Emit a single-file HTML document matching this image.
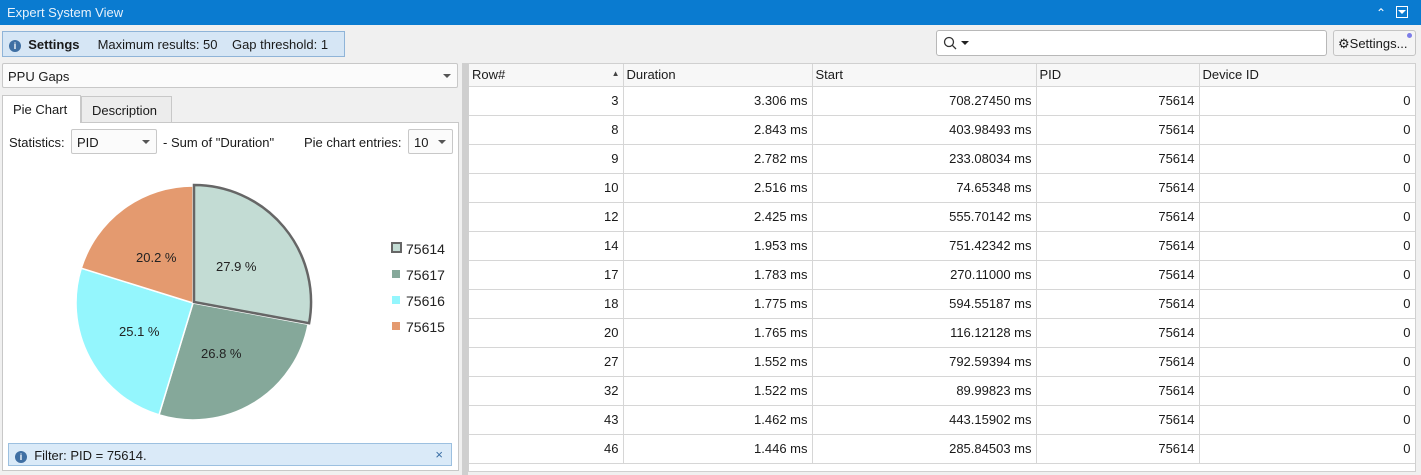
<!DOCTYPE html>
<html><head><meta charset="utf-8"><style>
*{box-sizing:border-box;margin:0;padding:0}
body{width:1421px;height:475px;overflow:hidden;background:#f0f0f0;font-family:"Liberation Sans",sans-serif;font-size:13px;color:#1a1a1a;position:relative}
.abs{position:absolute}
.title{left:0;top:0;width:1421px;height:25px;background:#0a7bd0;color:#e8f2fb;padding:5px 7px;font-size:13px}
.setbar{left:2px;top:31px;width:343px;height:26px;background:#d6e6f5;border:1px solid #8fb4d8;padding:5px 6px;white-space:nowrap}
.info{display:inline-block;width:12px;height:12px;border-radius:50%;background:#3f6fa3;color:#fff;font-size:9px;text-align:center;line-height:12px;font-weight:bold;vertical-align:0px}
.search{left:936px;top:30px;width:391px;height:26px;background:#fff;border:1px solid #b8b8b8;border-radius:3px}
.btn{left:1333px;top:30px;width:83px;height:26px;background:#f4f4f4;border:1px solid #c4c4c4;border-radius:3px;padding:5px 4px;white-space:nowrap}
.combo{background:#fbfbfb;border:1px solid #c8c8c8;border-radius:2px}
.arrow{position:absolute;width:0;height:0;border-left:4px solid transparent;border-right:4px solid transparent;border-top:4px solid #555}
table{border-collapse:collapse;table-layout:fixed;background:#fff}
td{height:29px;border-right:1px solid #d6d6d6;border-bottom:1px solid #d6d6d6;text-align:right;padding:0 4px;font-size:13px}
th{height:22px;font-weight:normal;text-align:left;padding:0 3px;border-right:1px solid #d6d6d6;border-bottom:1px solid #d6d6d6;background:#f7f7f7;font-size:13px}
</style></head><body>
<div class="abs title">Expert System View</div>
<div class="abs" style="left:1376px;top:6px;color:#fff;font-size:12px">&#8963;</div>
<div class="abs" style="left:1396px;top:6px;width:12px;height:12px;border:1px solid #fff;"><div class="arrow" style="left:1px;top:3px;border-top-color:#fff"></div></div>

<div class="abs setbar"><span class="info">i</span>&nbsp; <b>Settings</b>&nbsp;&nbsp;&nbsp;&nbsp; Maximum results: 50 &nbsp;&nbsp; Gap threshold: 1</div>
<div class="abs search"><svg class="abs" style="left:6px;top:5px" width="14" height="14"><circle cx="6" cy="6" r="4.5" fill="none" stroke="#333" stroke-width="1.3"/><line x1="9.3" y1="9.3" x2="13" y2="13" stroke="#333" stroke-width="1.3"/></svg><div class="arrow" style="left:24px;top:10px;border-top-color:#222"></div></div>
<div class="abs btn"><span style="font-size:13px">&#9881;</span>Settings...</div>
<div class="abs" style="left:1407px;top:33px;width:5px;height:5px;border-radius:50%;background:#7d7de8"></div>

<div class="abs combo" style="left:2px;top:63px;width:456px;height:25px;padding:5px 5px">PPU Gaps<div class="arrow" style="right:6px;top:10px"></div></div>
<div class="abs" style="left:2px;top:95px;width:79px;height:28px;background:#fff;border:1px solid #c8c8c8;border-bottom:none;padding:6px 10px;z-index:2">Pie Chart</div>
<div class="abs" style="left:81px;top:96px;width:91px;height:27px;background:#ececec;border:1px solid #c8c8c8;padding:6px 10px">Description</div>
<div class="abs" style="left:2px;top:122px;width:457px;height:349px;background:#fff;border:1px solid #c8c8c8"></div>
<div class="abs" style="left:9px;top:135px">Statistics:</div>
<div class="abs combo" style="left:71px;top:129px;width:86px;height:25px;padding:5px 5px">PID<div class="arrow" style="right:6px;top:10px"></div></div>
<div class="abs" style="left:163px;top:135px">- Sum of "Duration"</div>
<div class="abs" style="left:304px;top:135px">Pie chart entries:</div>
<div class="abs combo" style="left:408px;top:129px;width:45px;height:25px;padding:5px 5px">10<div class="arrow" style="right:6px;top:10px"></div></div>

<svg class="abs" style="left:0;top:0" width="460" height="440">
<path d="M193,303 L193,186 A117,117 0 0 1 308.1,324.2 Z" fill="#c3dcd4" stroke="#fff" stroke-width="1.5"/>
<path d="M193,303 L308.1,324.2 A117,117 0 0 1 159,414.9 Z" fill="#85a89a" stroke="#fff" stroke-width="1.5"/>
<path d="M193,303 L159,414.9 A117,117 0 0 1 81.3,268.2 Z" fill="#94f6fd" stroke="#fff" stroke-width="1.5"/>
<path d="M193,303 L81.3,268.2 A117,117 0 0 1 193,186 Z" fill="#e49a6f" stroke="#fff" stroke-width="1.5"/>
<path d="M194,302 L194,185 A117,117 0 0 1 309.1,323.2 Z" fill="#c3dcd4" stroke="#666" stroke-width="2.5"/>
<g font-family="Liberation Sans" font-size="13" fill="#222">
<text x="216" y="271">27.9 %</text><text x="136" y="262">20.2 %</text>
<text x="119" y="336">25.1 %</text><text x="201" y="358">26.8 %</text>
</g>
<g font-family="Liberation Sans" font-size="14" fill="#222">
<text x="406" y="254">75614</text><text x="406" y="280">75617</text><text x="406" y="306">75616</text><text x="406" y="332">75615</text>
</g>
<rect x="392" y="243" width="9" height="9" fill="#c3dcd4" stroke="#666" stroke-width="2"/>
<rect x="392" y="270" width="8" height="8" fill="#85a89a"/>
<rect x="392" y="296" width="8" height="8" fill="#94f6fd"/>
<rect x="392" y="322" width="8" height="8" fill="#e49a6f"/>
</svg>

<div class="abs" style="left:8px;top:443px;width:444px;height:23px;background:#daeaf8;border:1px solid #9cc0e0;padding:4px 6px"><span class="info">i</span>&nbsp; Filter: PID = 75614.<span style="position:absolute;right:8px;top:3px;color:#3a6ea5">&#215;</span></div>

<div class="abs" style="left:462px;top:63px;width:6px;height:412px;background:#cfcfcf"></div>
<div class="abs" style="left:468px;top:63px;width:948px;height:409px;background:#fff;border:1px solid #d0d0d0;overflow:hidden">
<table style="width:946px">
<colgroup><col style="width:154px"><col style="width:189px"><col style="width:224px"><col style="width:163px"><col style="width:216px"></colgroup>
<tr><th>Row#<span style="float:right;font-size:8px;color:#444;margin-top:2px">&#9650;</span></th><th>Duration</th><th>Start</th><th>PID</th><th style="border-right:none">Device ID</th></tr>
<tr><td>3</td><td>3.306 ms</td><td>708.27450 ms</td><td>75614</td><td>0</td></tr>
<tr><td>8</td><td>2.843 ms</td><td>403.98493 ms</td><td>75614</td><td>0</td></tr>
<tr><td>9</td><td>2.782 ms</td><td>233.08034 ms</td><td>75614</td><td>0</td></tr>
<tr><td>10</td><td>2.516 ms</td><td>74.65348 ms</td><td>75614</td><td>0</td></tr>
<tr><td>12</td><td>2.425 ms</td><td>555.70142 ms</td><td>75614</td><td>0</td></tr>
<tr><td>14</td><td>1.953 ms</td><td>751.42342 ms</td><td>75614</td><td>0</td></tr>
<tr><td>17</td><td>1.783 ms</td><td>270.11000 ms</td><td>75614</td><td>0</td></tr>
<tr><td>18</td><td>1.775 ms</td><td>594.55187 ms</td><td>75614</td><td>0</td></tr>
<tr><td>20</td><td>1.765 ms</td><td>116.12128 ms</td><td>75614</td><td>0</td></tr>
<tr><td>27</td><td>1.552 ms</td><td>792.59394 ms</td><td>75614</td><td>0</td></tr>
<tr><td>32</td><td>1.522 ms</td><td>89.99823 ms</td><td>75614</td><td>0</td></tr>
<tr><td>43</td><td>1.462 ms</td><td>443.15902 ms</td><td>75614</td><td>0</td></tr>
<tr><td>46</td><td>1.446 ms</td><td>285.84503 ms</td><td>75614</td><td>0</td></tr>
</table></div>
</body></html>
